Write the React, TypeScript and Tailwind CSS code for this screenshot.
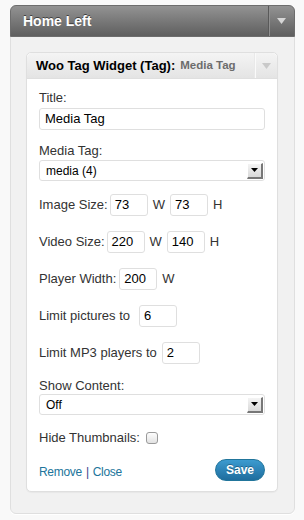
import React from "react";

function Arrow({ color }: { color: string }) {
  return (
    <svg width="9" height="6" viewBox="0 0 9 6">
      <polygon points="0,0 9,0 4.5,6" fill={color} />
    </svg>
  );
}

function FakeSelect({ value }: { value: string }) {
  return (
    <div className="flex h-[21px] items-center justify-between rounded-[3px] border border-[#dfdfdf] bg-white pl-[6px] pr-[1px]">
      <span className="text-[12px] text-black">{value}</span>
      <div className="flex h-[16px] w-[16px] items-center justify-center border-b-2 border-r-2 border-b-[#777] border-r-[#777] border-t border-l border-t-[#fff] border-l-[#fff] bg-gradient-to-b from-[#f4f4f4] to-[#d9d9d9]">
        <svg width="7" height="4" viewBox="0 0 7 4">
          <polygon points="0,0 7,0 3.5,4" fill="#000" />
        </svg>
      </div>
    </div>
  );
}

function NumInput({ value, className = "" }: { value: string; className?: string }) {
  return (
    <div
      className={
        "flex h-[22px] w-[38px] items-center rounded-[3px] border border-[#dfdfdf] bg-white px-[4px] text-[13px] text-black " +
        className
      }
    >
      {value}
    </div>
  );
}

export default function App() {
  return (
    <div className="min-h-[520px] w-[304px] bg-[#f9f9f9] pt-[5px] font-['Liberation_Sans',Arial,sans-serif] text-[#333]">
      <div className="ml-[10px] w-[285px] rounded-[6px] border border-[#dfdfdf] bg-[#f1f1f1] shadow-[0_1px_0_#fff]">
        {/* sidebar header */}
        <div className="-mx-px -mt-px flex h-[32px] items-stretch rounded-t-[6px] border border-[#6d6d6d] bg-gradient-to-b from-[#939393] to-[#5f5f5f]">
          <div className="flex flex-1 items-center pl-[12px] text-[14px] font-bold text-white [text-shadow:0_-1px_0_#3f3f3f]">
            Home Left
          </div>
          <div className="flex w-[26px] items-center justify-center border-l border-l-[#595959] shadow-[inset_1px_0_0_#8f8f8f]">
            <Arrow color="#d6d6d6" />
          </div>
        </div>

        {/* sidebar body */}
        <div className="pb-[21px] pl-[15px] pr-[16px] pt-[15px]">
          <div className="rounded-[5px] border border-[#dfdfdf] bg-white shadow-[0_1px_1px_rgba(0,0,0,0.04)]">
            <div className="flex h-[26px] items-stretch rounded-t-[5px] border-b border-[#dfdfdf] bg-gradient-to-b from-[#f4f4f4] to-[#e4e4e4]">
              <div className="flex flex-1 items-center whitespace-nowrap pl-[9px] text-[13px] font-bold text-black">
                Woo Tag Widget (Tag):
                <span className="ml-[5px] text-[11.5px] text-[#6c6c6c]">Media Tag</span>
              </div>
              <div className="flex w-[23px] items-center justify-center border-l border-l-[#e9e9e9] shadow-[inset_1px_0_0_#fafafa]">
                <Arrow color="#c9c9c9" />
              </div>
            </div>

            <div className="px-[12px] pb-[10px] pt-[11px] text-[13px]">
              <div className="leading-[16px]">Title:</div>
              <div className="mt-[2px] flex h-[22px] items-center rounded-[3px] border border-[#dfdfdf] bg-white px-[5px] text-[13px] text-black">
                Media Tag
              </div>

              <div className="mt-[13px] leading-[16px]">Media Tag:</div>
              <div className="mt-px">
                <FakeSelect value="media (4)" />
              </div>

              <div className="mt-[13px] flex h-[22px] items-center">
                <span>Image Size:</span>
                <NumInput value="73" className="ml-[2px]" />
                <span className="ml-[5px]">W</span>
                <NumInput value="73" className="ml-[5px]" />
                <span className="ml-[5px]">H</span>
              </div>

              <div className="mt-[15px] flex h-[22px] items-center">
                <span>Video Size:</span>
                <NumInput value="220" className="ml-[2px]" />
                <span className="ml-[5px]">W</span>
                <NumInput value="140" className="ml-[5px]" />
                <span className="ml-[5px]">H</span>
              </div>

              <div className="mt-[15px] flex h-[22px] items-center">
                <span>Player Width:</span>
                <NumInput value="200" className="ml-[3px]" />
                <span className="ml-[5px]">W</span>
              </div>

              <div className="mt-[15px] flex h-[22px] items-center">
                <span>Limit pictures to</span>
                <NumInput value="6" className="ml-[9px]" />
              </div>

              <div className="mt-[15px] flex h-[22px] items-center">
                <span>Limit MP3 players to</span>
                <NumInput value="2" className="ml-[5px]" />
              </div>

              <div className="mt-[14px] leading-[16px]">Show Content:</div>
              <div>
                <FakeSelect value="Off" />
              </div>

              <div className="mt-[15px] flex h-[16px] items-center">
                <span>Hide Thumbnails:</span>
                <span className="ml-[6px] inline-block h-[12px] w-[12px] rounded-[3px] border border-[#9a9a9a] bg-gradient-to-b from-[#fdfdfd] to-[#e2e2e2]" />
              </div>

              <div className="mt-[13px] flex h-[22px] items-center justify-between">
                <div className="pt-[4px] text-[12px] tracking-[-0.3px]">
                  <a className="text-[#21759b]">Remove</a>
                  <span className="mx-[4px] text-[#3b3f8c]">|</span>
                  <a className="text-[#21759b]">Close</a>
                </div>
                <button className="h-[22px] w-[50px] rounded-full border border-[#21759b] bg-gradient-to-b from-[#3c9bd0] to-[#1f6d9e] text-[12px] font-bold text-white [text-shadow:0_-1px_0_rgba(0,0,0,0.3)]">
                  Save
                </button>
              </div>
            </div>
          </div>
        </div>
      </div>
    </div>
  );
}
